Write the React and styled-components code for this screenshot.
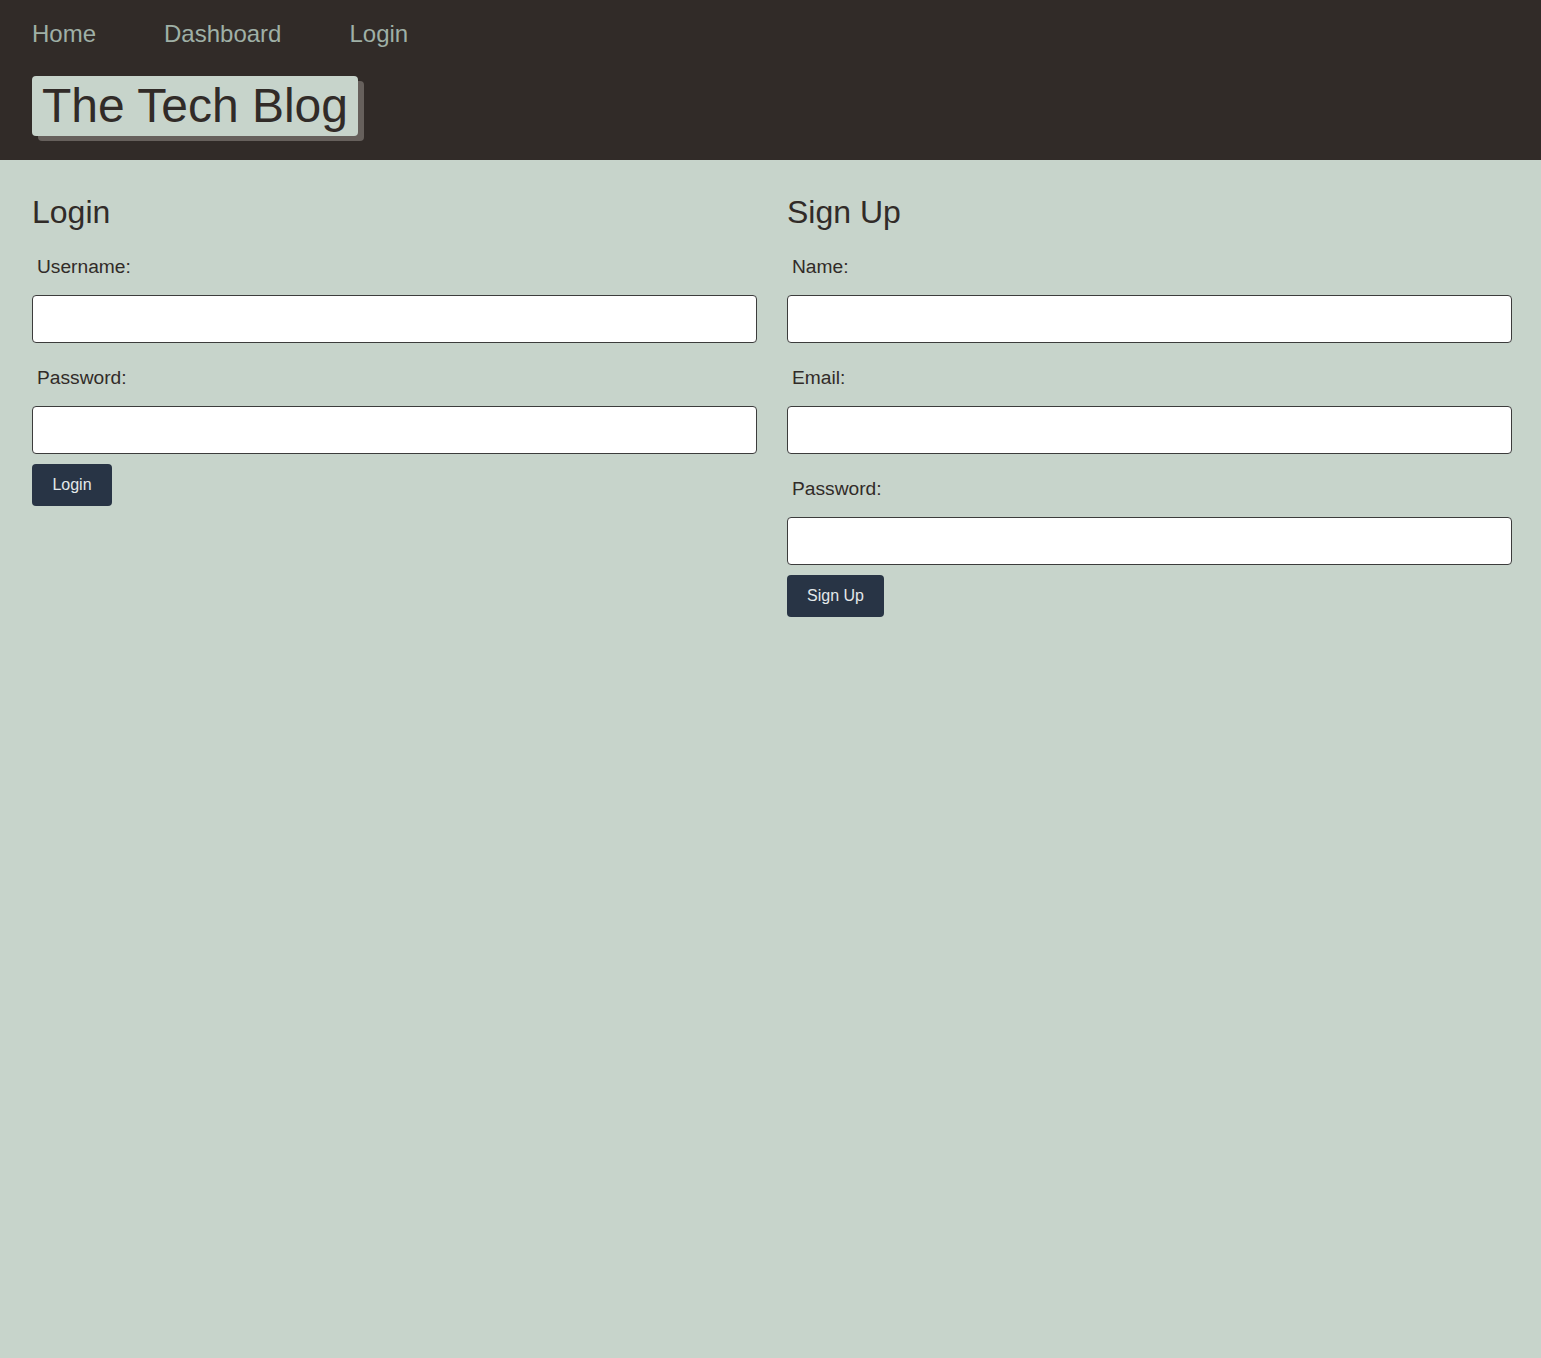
import React from "react";
import styled, { createGlobalStyle } from "styled-components";

const Global = createGlobalStyle`
  html, body { margin: 0; padding: 0; }
  body {
    background: #c7d4cb;
    font-family: "Liberation Sans", Arial, sans-serif;
    color: #312b28;
    min-height: 1358px;
  }
`;

const Header = styled.header`
  background: #312b28;
  padding: 20px 32px 24px;
  height: 160px;
  box-sizing: border-box;
`;

const Nav = styled.nav`
  display: flex;
  gap: 68px;
`;

const NavLink = styled.a`
  font-size: 24px;
  line-height: 28px;
  color: #9fb0a6;
  text-decoration: none;
`;

const Title = styled.h1`
  display: inline-block;
  margin: 28px 0 0;
  padding: 0 10px;
  height: 60px;
  font-size: 48px;
  font-weight: 400;
  line-height: 60px;
  background: #c7d4cb;
  color: #312b28;
  border-radius: 4px;
  box-shadow: 6px 5px 0 #66605c;
`;

const Main = styled.main`
  display: grid;
  grid-template-columns: 1fr 1fr;
  gap: 30px;
  padding: 34px 29px 0 32px;
`;

const Column = styled.section`
  display: flex;
  flex-direction: column;
  align-items: flex-start;
`;

const Heading = styled.h2`
  margin: 0 0 11px;
  font-size: 32px;
  font-weight: 400;
  line-height: 37px;
`;

const Label = styled.label`
  display: block;
  margin-top: 14px;
  margin-bottom: 17px;
  padding-left: 5px;
  font-size: 19.2px;
  line-height: 22px;
`;

const Input = styled.input`
  box-sizing: border-box;
  width: 100%;
  height: 48px;
  margin: 0 0 10px;
  border: 1px solid #3c3c3c;
  border-radius: 4px;
  background: #fff;
  font-size: 16px;
  padding: 0 10px;
`;

const Button = styled.button`
  height: 42px;
  padding: 0 20px;
  min-width: ${(p) => p.$minWidth || 0}px;
  border: none;
  border-radius: 4px;
  background: #283445;
  color: #e3e8ea;
  font-family: "Liberation Sans", Arial, sans-serif;
  font-size: 16px;
  cursor: pointer;
`;

function Field({ label, type = "text" }) {
  return (
    <>
      <Label>{label}</Label>
      <Input type={type} />
    </>
  );
}

export default function App() {
  return (
    <>
      <Global />
      <Header>
        <Nav>
          <NavLink href="#">Home</NavLink>
          <NavLink href="#">Dashboard</NavLink>
          <NavLink href="#">Login</NavLink>
        </Nav>
        <Title>The Tech Blog</Title>
      </Header>
      <Main>
        <Column>
          <Heading>Login</Heading>
          <Field label="Username:" />
          <Field label="Password:" type="password" />
          <Button $minWidth={80}>Login</Button>
        </Column>
        <Column>
          <Heading>Sign Up</Heading>
          <Field label="Name:" />
          <Field label="Email:" type="email" />
          <Field label="Password:" type="password" />
          <Button>Sign Up</Button>
        </Column>
      </Main>
    </>
  );
}
